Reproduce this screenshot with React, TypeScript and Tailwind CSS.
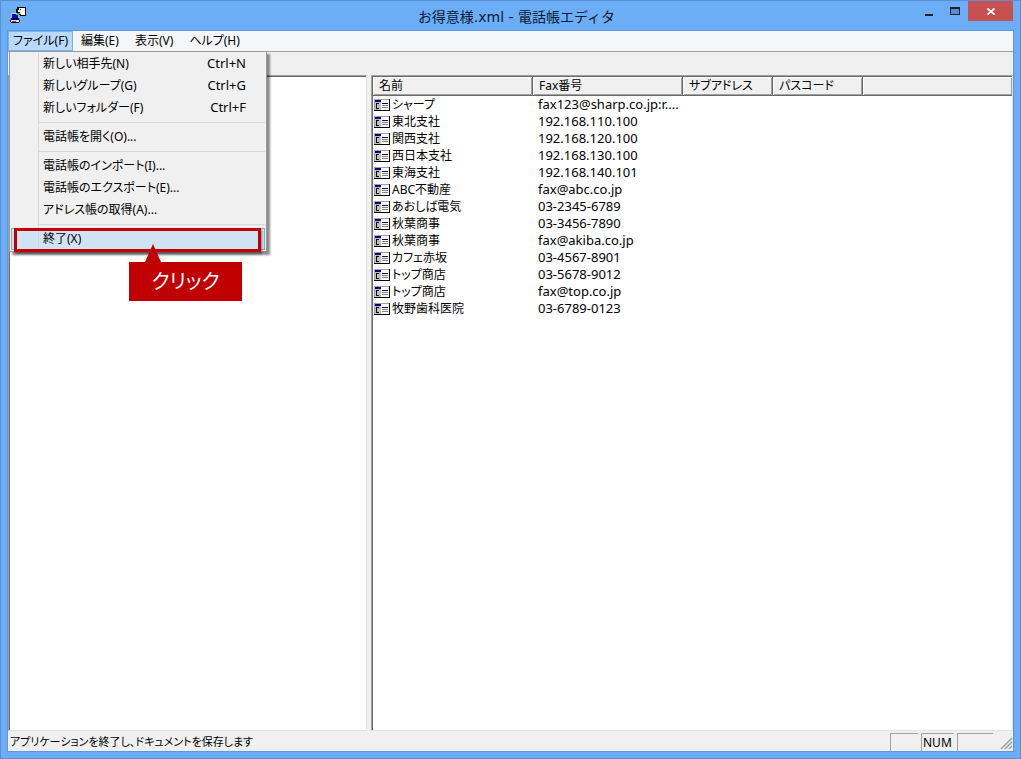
import { Fragment } from "react";

type MenuEntry = { label: string; shortcut?: string; active?: boolean };

type Contact = { name: string; fax: string };

const menus = ["ファイル(F)", "編集(E)", "表示(V)", "ヘルプ(H)"];

const fileMenu: MenuEntry[][] = [
  [
    { label: "新しい相手先(N)", shortcut: "Ctrl+N" },
    { label: "新しいグループ(G)", shortcut: "Ctrl+G" },
    { label: "新しいフォルダー(F)", shortcut: "Ctrl+F" },
  ],
  [{ label: "電話帳を開く(O)..." }],
  [
    { label: "電話帳のインポート(I)..." },
    { label: "電話帳のエクスポート(E)..." },
    { label: "アドレス帳の取得(A)..." },
  ],
  [{ label: "終了(X)", active: true }],
];

const contacts: Contact[] = [
  { name: "シャープ", fax: "fax123@sharp.co.jp:r...." },
  { name: "東北支社", fax: "192.168.110.100" },
  { name: "関西支社", fax: "192.168.120.100" },
  { name: "西日本支社", fax: "192.168.130.100" },
  { name: "東海支社", fax: "192.168.140.101" },
  { name: "ABC不動産", fax: "fax@abc.co.jp" },
  { name: "あおしば電気", fax: "03-2345-6789" },
  { name: "秋葉商事", fax: "03-3456-7890" },
  { name: "秋葉商事", fax: "fax@akiba.co.jp" },
  { name: "カフェ赤坂", fax: "03-4567-8901" },
  { name: "トップ商店", fax: "03-5678-9012" },
  { name: "トップ商店", fax: "fax@top.co.jp" },
  { name: "牧野歯科医院", fax: "03-6789-0123" },
];

const columns = ["名前", "Fax番号", "サブアドレス", "パスコード", ""];

function AppIcon() {
  return (
    <svg width="16" height="16" viewBox="0 0 16 16" shapeRendering="crispEdges" aria-hidden="true">
      <path d="M7 0h9v9h-6v-1h-1v-1h-2v-1h-1v-4h1z" fill="#000" />
      <path d="M9 1h6v7h-4v-1h-1v-1h-1v-1h-1v-2h1z" fill="#fff" />
      <path d="M10 2h1v1h-1zM9 5h1v1h-1zM7 3h1v1h-1z" fill="#000" />
      <path d="M1 6h8v6h-8z" fill="#c8c8c8" />
      <path d="M2 7h6v4h-6z" fill="#0000e8" />
      <path d="M6 7h1v-1h3v1h-1v1h-3z" fill="#22d34a" />
      <path d="M1 11h8v1h-8z" fill="#000" />
      <path d="M1 12h8v1h1v2h-1v1h-8v-1h-1v-2h1z" fill="#000" />
      <path d="M1 13h8v2h-8z" fill="#e4e4e4" />
      <path d="M2 14h4v1h-4z" fill="#555" />
    </svg>
  );
}

function CardIcon() {
  return (
    <svg width="16" height="12" viewBox="0 0 16 12" shapeRendering="crispEdges" className="shrink-0" aria-hidden="true">
      <path d="M0 0h16v12h-16z" fill="#fff" />
      <path d="M0 0h15v1h-15zM0 1h1v10h-1z" fill="#a0a0a0" />
      <path d="M1 2h6v9h-6z" fill="#c0c0c0" />
      <path d="M1 1h6v2h-6z" fill="#000080" />
      <path d="M2 4h3v1h-2v4h2v1h-3z" fill="#000" />
      <path d="M8 4h6v1h-6z" fill="#000080" />
      <path d="M8 6h6v1h-6zM8 8h6v1h-6z" fill="#808080" />
      <path d="M15 0h1v12h-16v-1h15z" fill="#000" />
    </svg>
  );
}

function TitleBar() {
  return (
    <header className="flex h-[30px] items-start">
      <div className="w-[110px] pl-[2px] pt-[6px]">
        <AppIcon />
      </div>
      <h1 className="flex-1 pt-[6px] text-center font-['DejaVu_Sans','Noto_Sans_CJK_JP',sans-serif] text-[14px] leading-[20px] text-[#0b1b33]">
        お得意様.xml - 電話帳エディタ
      </h1>
      <div className="flex w-[98px] justify-end">
        <button type="button" aria-label="最小化" className="flex h-5 w-[27px] items-center justify-center">
          <span className="mt-[7px] h-[2px] w-2 bg-[#222]" />
        </button>
        <button type="button" aria-label="最大化" className="flex h-5 w-[26px] items-center justify-center">
          <span className="h-2 w-[10px] border border-t-2 border-[#222] bg-[#5d87d8]" />
        </button>
        <button type="button" aria-label="閉じる" className="flex h-5 w-[45px] items-center justify-center bg-[#c75050]">
          <svg width="8" height="7" viewBox="0 0 8 7" aria-hidden="true">
            <path d="M0.5 0.5L7.5 6.5M7.5 0.5L0.5 6.5" stroke="#fff" strokeWidth="1.8" />
          </svg>
        </button>
      </div>
    </header>
  );
}

function Callout() {
  return (
    <>
      <div className="pointer-events-none absolute -bottom-[2px] left-[3px] right-[4px] top-0 border-[3px] border-[#c00000] shadow-[1px_2px_2px_rgba(0,0,0,0.4)]" />
      <div className="pointer-events-none absolute left-[118px] top-[16px] flex w-[113px] flex-col">
        <svg width="16" height="18" viewBox="0 0 16 18" className="ml-4" aria-hidden="true">
          <path d="M8 0L16 18H0z" fill="#c00000" />
        </svg>
        <div className="bg-[#c00000] text-center text-[20px] leading-[39px] text-white">クリック</div>
      </div>
    </>
  );
}

function FileMenu() {
  return (
    <div
      role="menu"
      className="absolute left-px top-full z-10 w-[258px] border border-[#979797] bg-[#f0f0f0] p-px shadow-[3px_3px_2px_rgba(0,0,0,0.45)]"
    >
      {fileMenu.map((group, i) => (
        <Fragment key={i}>
          {i > 0 && (
            <div className="ml-[27px] h-[7px] border-l border-[#d7d7d7] pt-[3px]">
              <div className="h-px bg-[#d7d7d7]" />
            </div>
          )}
          {group.map((item) => (
            <div key={item.label} className="relative">
              <button
                type="button"
                role="menuitem"
                className={
                  item.active
                    ? "flex h-[22px] w-full border border-[#78aee5] bg-[#d1e2f2] pl-[26px]"
                    : "flex h-[22px] w-full border-x border-transparent pl-[26px]"
                }
              >
                <span className="flex flex-1 items-center justify-between self-stretch border-l border-[#d7d7d7] pl-1 pr-[18px]">
                  <span>{item.label}</span>
                  {item.shortcut && <span className="text-[13px]">{item.shortcut}</span>}
                </span>
              </button>
              {item.active && <Callout />}
            </div>
          ))}
        </Fragment>
      ))}
    </div>
  );
}

function MenuBar() {
  return (
    <nav className="relative flex h-5 bg-[#f5f6f7]">
      {menus.map((label, i) => (
        <button
          key={label}
          type="button"
          className={
            i === 0
              ? "border border-[#7ab3ee] bg-[#b9dafb] px-1 leading-[18px]"
              : "border border-transparent px-[7px] leading-[18px]"
          }
        >
          {label}
        </button>
      ))}
      <FileMenu />
    </nav>
  );
}

function ContactList() {
  return (
    <section className="flex-1 border border-[#a0a0a0] border-b-[#e3e3e3] border-r-[#e3e3e3] bg-white pl-px pt-px shadow-[inset_1px_1px_#696969]">
      <table className="w-full table-fixed border-separate border-spacing-0">
        <colgroup>
          <col className="w-[160px]" />
          <col className="w-[150px]" />
          <col className="w-[90px]" />
          <col className="w-[90px]" />
          <col />
        </colgroup>
        <thead>
          <tr>
            {columns.map((label, i) => (
              <th
                key={i}
                className="h-[19px] border-b border-r border-[#696969] bg-[#f0f0f0] p-0 pl-[6px] text-left font-normal leading-[18px] shadow-[inset_1px_1px_#fff,inset_-1px_-1px_#a0a0a0] last:border-r-0"
              >
                {label}
              </th>
            ))}
          </tr>
        </thead>
        <tbody>
          {contacts.map((contact, i) => (
            <tr key={i}>
              <td className="h-[17px] p-0 leading-[17px]">
                <span className="flex items-center gap-[2px] pl-px">
                  <CardIcon />
                  {contact.name}
                </span>
              </td>
              <td className="whitespace-nowrap p-0 pl-[5px] text-[13px] leading-[17px]">{contact.fax}</td>
              <td />
              <td />
              <td />
            </tr>
          ))}
        </tbody>
      </table>
    </section>
  );
}

function StatusBar() {
  return (
    <footer className="flex h-5 items-stretch gap-[3px] pl-[2px] pt-[2px]">
      <span className="flex-1 text-[11px] leading-[18px]">アプリケーションを終了し、ドキュメントを保存します</span>
      <span className="w-7 border-l border-t border-[#a0a0a0]" />
      <span className="w-[33px] border-l border-t border-[#a0a0a0] pl-px leading-[17px]">NUM</span>
      <span className="w-9 border-l border-t border-[#a0a0a0]" />
      <svg width="17" height="17" viewBox="0 0 17 17" aria-hidden="true">
        <path d="M5 16L16 5M9 16L16 9M13 16L16 13" stroke="#a0a0a0" strokeWidth="1.5" />
      </svg>
    </footer>
  );
}

export default function App() {
  return (
    <div className="flex min-h-screen flex-col border border-[#5a8fd0] bg-[#6badf6] px-[7px] pb-[7px] font-['Noto_Sans','Noto_Sans_CJK_JP',sans-serif] text-[12px] text-black">
      <TitleBar />
      <main className="flex flex-1 flex-col bg-[#f0f0f0] outline outline-[#5a98e0] [font-feature-settings:'palt']">
        <MenuBar />
        <div className="h-6 border-t border-[#a0a0a0]" />
        <div className="flex flex-1 gap-1">
          <aside className="w-[359px] border border-[#a0a0a0] border-b-[#e3e3e3] border-r-[#e3e3e3] bg-white shadow-[inset_1px_1px_#696969]" />
          <ContactList />
        </div>
        <StatusBar />
      </main>
    </div>
  );
}
